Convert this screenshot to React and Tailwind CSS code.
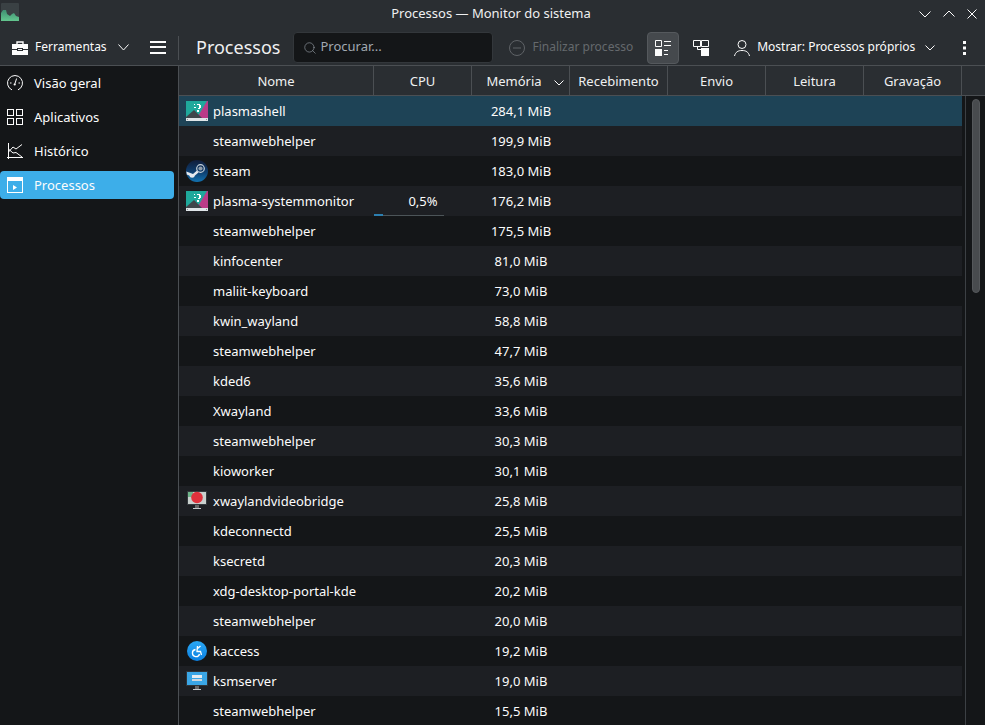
import { Search } from 'lucide-react';

function Chevron({ up, width = 11, className = '' }) {
    const h = Math.ceil(width / 2) + 1;
    const mid = width / 2;
    const pts = up
        ? `0.5,${h - 0.5} ${mid},1 ${width - 0.5},${h - 0.5}`
        : `0.5,0.5 ${mid},${h - 1} ${width - 0.5},0.5`;
    return (
        <svg width={width} height={h} viewBox={`0 0 ${width} ${h}`} className={`shrink-0 ${className}`}>
            <polyline points={pts} fill="none" stroke="#fcfcfc" strokeWidth="1" />
        </svg>
    );
}

function PlasmaIcon() {
    return (
        <svg width="22" height="20" viewBox="0 0 22 20">
            <rect x="0" y="0" width="22" height="17" fill="#b93b88" />
            <polygon points="0,0 21,0 11,17 0,17" fill="#1fa99c" />
            <polygon points="0,17 0,16 8,9 16,17" fill="#3f464b" />
            <rect x="0" y="17" width="22" height="3" fill="#dfe5e8" />
            <rect x="1" y="18" width="1" height="1" fill="#8a9094" />
            <rect x="20" y="18" width="1" height="1" fill="#8a9094" />
            <rect x="11" y="3" width="3" height="1" fill="#fff" />
            <rect x="13" y="4" width="2" height="3" fill="#fff" />
            <rect x="12" y="7" width="2" height="1" fill="#fff" />
            <rect x="11" y="9" width="2" height="2" fill="#fff" />
            <rect x="8" y="3" width="1" height="1" fill="#fff" />
            <rect x="8" y="6" width="2" height="1" fill="#fff" />
        </svg>
    );
}

function SteamIcon() {
    return (
        <svg width="22" height="22" viewBox="0 0 22 22">
            <defs>
                <linearGradient id="st" x1="0" y1="0" x2="0" y2="1">
                    <stop offset="0" stopColor="#111d3a" />
                    <stop offset="0.55" stopColor="#0e3f70" />
                    <stop offset="1" stopColor="#1272b0" />
                </linearGradient>
            </defs>
            <circle cx="11" cy="11" r="11" fill="url(#st)" />
            <circle cx="14.5" cy="8.5" r="3.8" fill="none" stroke="#c9d2da" strokeWidth="1.2" />
            <circle cx="14.5" cy="8.5" r="2.1" fill="#8f9dab" />
            <path d="M0.3 11.5 L7 14 L11 10.5 L12.5 12.5 L9 15.5 A3 3 0 0 1 3.2 15.6 L0.8 14.5 Z" fill="#e4e9ee" />
        </svg>
    );
}

function BridgeIcon() {
    return (
        <svg width="20" height="20" viewBox="0 0 20 20">
            <rect x="0" y="0" width="20" height="14" fill="#34393d" />
            <rect x="1" y="1" width="18" height="12" fill="#c9d0cd" />
            <rect x="1" y="1" width="5" height="5" fill="#6fb58a" />
            <circle cx="10" cy="6.5" r="5.8" fill="#e0323c" />
            <rect x="8" y="14" width="4" height="3" fill="#666" />
            <rect x="6" y="17" width="8" height="1" fill="#c4c8ca" />
        </svg>
    );
}

function AccessIcon() {
    return (
        <svg width="20" height="20" viewBox="0 0 20 20">
            <defs>
                <linearGradient id="ac" x1="0" y1="0" x2="0" y2="1">
                    <stop offset="0" stopColor="#2aa8f5" />
                    <stop offset="1" stopColor="#0b7fe0" />
                </linearGradient>
            </defs>
            <circle cx="10" cy="10" r="10" fill="url(#ac)" />
            <path d="M8.5 8.5 A3.6 3.6 0 1 0 12.5 13" fill="none" stroke="#fff" strokeWidth="1.3" />
            <path d="M10.5 5 L10 10.5 H13.5 L14.5 14" fill="none" stroke="#fff" strokeWidth="1.3" />
            <path d="M10.5 7.5 L13.5 5" fill="none" stroke="#fff" strokeWidth="1.3" />
        </svg>
    );
}

function KsmIcon() {
    return (
        <svg width="22" height="20" viewBox="0 0 22 20">
            <rect x="0" y="0" width="22" height="15" fill="#2f3438" />
            <rect x="1" y="1" width="20" height="13" fill="#3aa6e6" />
            <rect x="6" y="4" width="10" height="3" fill="#e6edf2" />
            <rect x="6" y="8" width="10" height="2" fill="#cfd8de" />
            <rect x="9" y="15" width="4" height="3" fill="#666" />
            <rect x="7" y="18" width="8" height="1" fill="#c4c8ca" />
        </svg>
    );
}

const rows = [
    ['plasmashell', '284,1 MiB', 'plasma'],
    ['steamwebhelper', '199,9 MiB'],
    ['steam', '183,0 MiB', 'steam'],
    ['plasma-systemmonitor', '176,2 MiB', 'plasma', '0,5%'],
    ['steamwebhelper', '175,5 MiB'],
    ['kinfocenter', '81,0 MiB'],
    ['maliit-keyboard', '73,0 MiB'],
    ['kwin_wayland', '58,8 MiB'],
    ['steamwebhelper', '47,7 MiB'],
    ['kded6', '35,6 MiB'],
    ['Xwayland', '33,6 MiB'],
    ['steamwebhelper', '30,3 MiB'],
    ['kioworker', '30,1 MiB'],
    ['xwaylandvideobridge', '25,8 MiB', 'bridge'],
    ['kdeconnectd', '25,5 MiB'],
    ['ksecretd', '20,3 MiB'],
    ['xdg-desktop-portal-kde', '20,2 MiB'],
    ['steamwebhelper', '20,0 MiB'],
    ['kaccess', '19,2 MiB', 'access'],
    ['ksmserver', '19,0 MiB', 'ksm'],
    ['steamwebhelper', '15,5 MiB'],
];

const icons = {
    plasma: <PlasmaIcon />,
    steam: <SteamIcon />,
    bridge: <BridgeIcon />,
    access: <AccessIcon />,
    ksm: <KsmIcon />,
};

function GaugeIcon() {
    return (
        <svg width="16" height="16" viewBox="0 0 16 16" fill="none" stroke="#fcfcfc" strokeWidth="1">
            <path d="M5 14.9 A7.5 7.5 0 1 1 11 14.9" />
            <path d="M7.8 9 L9.6 3.5" />
            <circle cx="7.7" cy="9.5" r="1.1" fill="#fcfcfc" stroke="none" />
            <path d="M3 8 H4.5 M11.5 8 H13" />
        </svg>
    );
}

function GridIcon() {
    return (
        <svg width="16" height="16" viewBox="0 0 16 16" fill="none" stroke="#fcfcfc" strokeWidth="1">
            <rect x="0.5" y="0.5" width="6" height="6" />
            <rect x="9.5" y="0.5" width="6" height="6" />
            <rect x="0.5" y="9.5" width="6" height="6" />
            <rect x="9.5" y="9.5" width="6" height="6" />
        </svg>
    );
}

function HistoryIcon() {
    return (
        <svg width="16" height="16" viewBox="0 0 16 16" fill="none" stroke="#fcfcfc" strokeWidth="1">
            <path d="M1.5 0 V16 M0 14.5 H16" />
            <path d="M1.5 9 L6 4 L9 6 L15 1.5" />
            <path d="M1.5 6 L6 10 L9 9.5 L15 14" />
        </svg>
    );
}

function ProcessIcon() {
    return (
        <svg width="16" height="16" viewBox="0 0 16 16">
            <rect x="0.5" y="0.5" width="15" height="15" fill="none" stroke="#fff" />
            <rect x="0" y="0" width="16" height="4" fill="#fff" />
            <polygon points="6,8 10,10.5 6,13" fill="#fff" />
        </svg>
    );
}

function ToolsIcon() {
    return (
        <svg width="16" height="14" viewBox="0 0 16 14" className="shrink-0">
            <path d="M5 3 V1 H11 V3" fill="none" stroke="#fcfcfc" strokeWidth="1.4" />
            <rect x="0" y="3" width="16" height="5" fill="#fcfcfc" />
            <rect x="0" y="9" width="16" height="5" fill="#fcfcfc" />
            <rect x="5" y="7" width="6" height="3" fill="#2a2e32" />
            <rect x="6" y="8" width="4" height="1" fill="#fcfcfc" />
        </svg>
    );
}

function HamburgerIcon() {
    return (
        <svg width="16" height="13" viewBox="0 0 16 13" fill="#fcfcfc" className="shrink-0">
            <rect x="0" y="0" width="16" height="2" />
            <rect x="0" y="5" width="16" height="2" />
            <rect x="0" y="11" width="16" height="2" />
        </svg>
    );
}

function EndIcon() {
    return (
        <svg width="16" height="16" viewBox="0 0 16 16" fill="none" stroke="#5f6367" strokeWidth="1" className="shrink-0">
            <circle cx="8" cy="8" r="7.5" />
            <path d="M4 8 H12" />
        </svg>
    );
}

function UserIcon() {
    return (
        <svg width="16" height="16" viewBox="0 0 16 16" fill="none" stroke="#fcfcfc" strokeWidth="1" className="shrink-0">
            <circle cx="8" cy="4.5" r="4" />
            <path d="M0.5 16 C1.5 12 4 10.5 8 10.5 C12 10.5 14.5 12 15.5 16" />
        </svg>
    );
}

function ColumnsIcon({ active }) {
    return active ? (
        <svg width="16" height="16" viewBox="0 0 16 16" fill="#fcfcfc">
            <path d="M0.5 0.5 H6.5 V6.5 H0.5 Z" fill="none" stroke="#fcfcfc" />
            <rect x="0" y="9" width="7" height="7" />
            <rect x="9" y="1" width="7" height="1" />
            <rect x="9" y="5" width="7" height="1" />
            <rect x="9" y="10" width="4" height="1" />
            <rect x="9" y="14" width="4" height="1" />
        </svg>
    ) : (
        <svg width="16" height="16" viewBox="0 0 16 16" fill="#fcfcfc">
            <path d="M0.5 0.5 H7.5 V6.5 H0.5 Z" fill="none" stroke="#fcfcfc" />
            <path d="M8.5 0.5 H15.5 V6.5 H8.5 Z" fill="none" stroke="#fcfcfc" />
            <path d="M4.5 7 V9.5 H8" fill="none" stroke="#fcfcfc" />
            <rect x="8" y="8" width="8" height="8" />
        </svg>
    );
}

const headers = ['CPU', 'Memória', 'Recebimento', 'Envio', 'Leitura', 'Gravação'];

function SideItem({ icon, label, active }) {
    return (
        <div className={`h-[28px] flex items-center gap-[11px] pl-[7px] rounded-[4px] text-[#fcfcfc] ${active ? 'bg-[#3daee9]' : ''}`}>
            <span className="w-[16px] flex justify-center">{icon}</span>
            <span className="pt-[2px]">{label}</span>
        </div>
    );
}

export default function App() {
    return (
        <div className="w-[985px] h-[725px] overflow-hidden flex flex-col bg-[#2a2e32] text-[#fcfcfc] text-[13px] font-['Noto_Sans',sans-serif]">
            {/* title bar */}
            <div className="h-[30px] shrink-0 flex items-center relative">
                <svg width="18" height="18" viewBox="0 0 18 18" className="absolute left-[1px] top-[3px]">
                    <defs>
                        <linearGradient id="app" x1="0" y1="0" x2="0" y2="1">
                            <stop offset="0" stopColor="#3f8f72" />
                            <stop offset="1" stopColor="#63c68f" />
                        </linearGradient>
                    </defs>
                    <rect width="18" height="18" rx="1" fill="#3a4144" />
                    <path d="M0 18 V10 L2 7 L5 7 L6 11 L9 13 L11 11 L13 10 L15 13 L18 14 V18 Z" fill="url(#app)" />
                </svg>
                <div className="w-full text-center pb-[3px] pr-[3px] text-[#eff0f1]">Processos — Monitor do sistema</div>
                <div className="absolute right-[8px] top-[10px] flex items-start gap-[12px]">
                    <Chevron width={12} className="mt-[1px]" />
                    <Chevron up width={12} />
                    <svg width="10" height="10" viewBox="0 0 10 10" className="-mt-[1px]">
                        <path d="M0.5 0.5 L9.5 9.5 M9.5 0.5 L0.5 9.5" stroke="#fcfcfc" strokeWidth="1" />
                    </svg>
                </div>
            </div>

            {/* toolbar */}
            <div className="h-[36px] shrink-0 flex items-center border-b border-[#4b4f53]">
                <div className="w-[178px] shrink-0 flex items-center pl-[12px]">
                    <ToolsIcon />
                    <span className="ml-[7px] pb-[2px] text-[12px]">Ferramentas</span>
                    <Chevron width={11} className="ml-[11px]" />
                    <span className="ml-[21px]"><HamburgerIcon /></span>
                </div>
                <div className="w-px h-[24px] bg-[#4b4f53]" />
                <span className="ml-[17px] text-[18px] text-[#eff0f1]">Processos</span>
                <div className="ml-[13px] w-[200px] h-[31px] bg-[#141618] rounded-[4px] border border-[#33373b] flex items-center pl-[9px] text-[#a1a9b1]">
                    <Search size={14} strokeWidth={1} />
                    <span className="ml-[3px] pb-[2px]">Procurar...</span>
                </div>
                <span className="ml-[16px]"><EndIcon /></span>
                <span className="ml-[7px] pb-[2px] text-[12px] text-[#65696d]">Finalizar processo</span>
                <div className="ml-[14px] w-[32px] h-[32px] rounded-[4px] bg-[#45494d] border border-[#55595d] flex items-center justify-center"><ColumnsIcon active /></div>
                <div className="ml-[6px] w-[32px] h-[32px] flex items-center justify-center"><ColumnsIcon /></div>
                <span className="ml-[17px]"><UserIcon /></span>
                <span className="ml-[7px] pb-[2px] text-[12px]">Mostrar: Processos próprios</span>
                <Chevron width={10} className="ml-[10px]" />
                <svg width="3" height="14" viewBox="0 0 3 14" fill="#fcfcfc" className="ml-[28px] shrink-0">
                    <rect width="3" height="3" />
                    <rect y="5.5" width="3" height="3" />
                    <rect y="11" width="3" height="3" />
                </svg>
            </div>

            <div className="flex-1 flex min-h-0">
                {/* sidebar */}
                <div className="w-[178px] shrink-0 bg-[#141618] pt-[3px]">
                    <div className="flex flex-col gap-[6px]">
                        <SideItem icon={<GaugeIcon />} label="Visão geral" />
                        <SideItem icon={<GridIcon />} label="Aplicativos" />
                        <SideItem icon={<HistoryIcon />} label="Histórico" />
                        <div className="pr-[4px]">
                            <SideItem icon={<ProcessIcon />} label="Processos" active />
                        </div>
                    </div>
                </div>
                <div className="w-px bg-[#4b4f53]" />

                {/* process table */}
                <div className="flex-1 min-w-0 flex flex-col">
                    <div className="h-[30px] shrink-0 flex border-b border-[#4b4f53] text-[#eff0f1]">
                        <div className="w-[195px] pt-[2px] flex items-center justify-center border-r border-[#4b4f53]">Nome</div>
                        {headers.map(h => (
                            <div key={h} className="w-[98px] pt-[2px] flex items-center justify-center border-r border-[#4b4f53] relative">
                                {h === 'Memória' ? <span className="pr-[13px]">{h}</span> : h}
                                {h === 'Memória' && <Chevron width={10} className="absolute right-[5px] top-[14px]" />}
                            </div>
                        ))}
                    </div>
                    <div className="flex-1 flex min-h-0 bg-[#141618]">
                        <div className="w-[783px] shrink-0">
                            {rows.map(([name, mem, icon, cpu], i) => (
                                <div key={i} className={`h-[30px] flex items-center ${i === 0 ? 'bg-[#1e4356]' : i % 2 ? 'bg-[#1d1f23]' : 'bg-[#141618]'}`}>
                                    <div className="w-[195px] shrink-0 flex items-center">
                                        <span className="w-[34px] shrink-0 flex justify-center pl-[1px]">{icons[icon]}</span>
                                        <span className="pt-[2px]">{name}</span>
                                    </div>
                                    <div className="w-[98px] shrink-0 h-full relative flex items-center justify-center">
                                        {cpu && (
                                            <>
                                                <span className="pt-[2px]">{cpu}</span>
                                                <div className="absolute left-0 bottom-0 w-[70px] h-px bg-[#4c5458]">
                                                    <div className="w-[9px] h-[2px] -mt-px bg-[#2c7fb0]" />
                                                </div>
                                            </>
                                        )}
                                    </div>
                                    <div className="w-[98px] shrink-0 text-center pt-[2px]">{mem}</div>
                                </div>
                            ))}
                        </div>
                        <div className="w-[3px]" />
                        <div className="w-px bg-[#3c4044]" />
                        <div className="flex-1 pt-[3px] pl-[6px]">
                            <div className="w-[8px] h-[194px] rounded-full bg-[#484b4e] border border-[#55585b]" />
                        </div>
                    </div>
                </div>
            </div>
        </div>
    );
}
